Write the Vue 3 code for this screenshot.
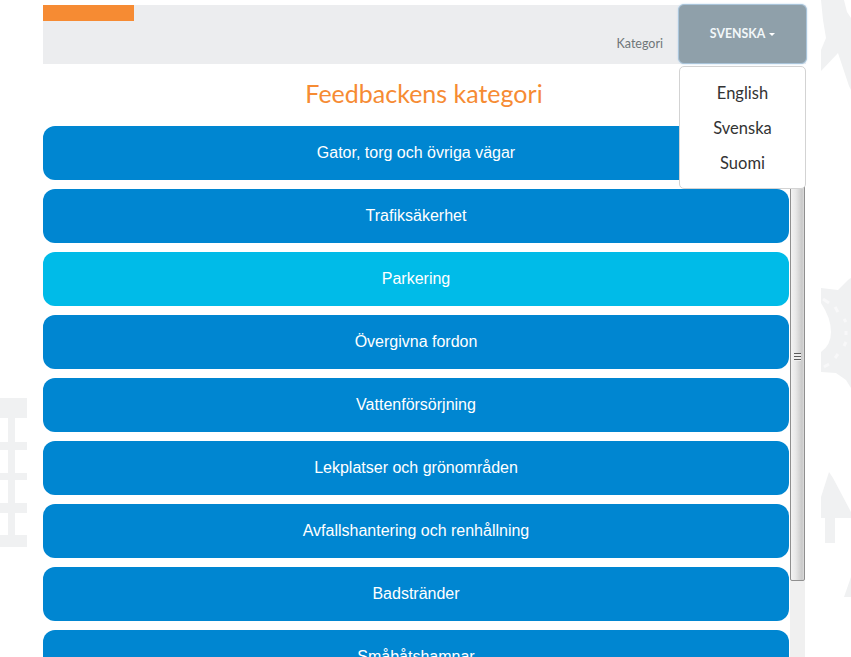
<script setup>
const categories = [
  { label: 'Gator, torg och övriga vägar' },
  { label: 'Trafiksäkerhet' },
  { label: 'Parkering', active: true },
  { label: 'Övergivna fordon' },
  { label: 'Vattenförsörjning' },
  { label: 'Lekplatser och grönområden' },
  { label: 'Avfallshantering och renhållning' },
  { label: 'Badstränder' },
  { label: 'Småbåtshamnar' }
]
const languages = ['English', 'Svenska', 'Suomi']
</script>

<template>
  <div class="page">
    <svg class="decor" width="851" height="657" viewBox="0 0 851 657" aria-hidden="true">
      <g fill="#f0f1f2">
        <path d="M0 398h27v20H15v24h12v8H15v23h12v7H15v23h12v10H15v22h12v12H0v-12h8v-22H0v-10h8v-23H0v-7h8v-23H0v-8h8v-24H0z" />
        <path d="M821 0H844L847 12L851 18V90L849 86L838 53L821 71V50L826 38L823 20Z" />
        <path d="M821 288L838 290L848 280L851 278V388L846 380L836 373L821 372V352Q831 345 831 332Q831 318 821 303Z" />
        <path d="M829 472L833 478L851 512V518H835V543H825V518H821V497Z" />
        <path d="M851 577L844 597H851Z" />
      </g>
      <g stroke="#f8f8f9" stroke-width="3" fill="none">
        <path d="M823 299L829 303M835 307L838 312M844 319L846 322M846 331V335M844 346L846 342M835 358L838 354M824 367L829 364" />
      </g>
    </svg>

    <main class="shell">
      <header class="topbar">
        <div class="logo"></div>
        <span class="crumb">Kategori</span>
        <div class="lang">
          <button class="lang-btn" type="button">SVENSKA<span class="caret"></span></button>
          <ul class="lang-menu">
            <li v-for="l in languages" :key="l">{{ l }}</li>
          </ul>
        </div>
      </header>

      <h1 class="title">Feedbackens kategori</h1>

      <div class="scroller">
        <div class="list">
          <button
            v-for="c in categories"
            :key="c.label"
            type="button"
            class="cat"
            :class="{ active: c.active }"
          >{{ c.label }}</button>
        </div>
        <div class="scrollbar">
          <div class="thumb"><span class="grip"></span></div>
        </div>
      </div>
    </main>
  </div>
</template>

<style>
html, body { margin: 0; background: #fff; overflow: hidden; }
</style>

<style scoped>
.page {
  position: relative;
  width: 851px;
  height: 657px;
  overflow: hidden;
  background: #fff;
  padding: 5px 0 0 43px;
  box-sizing: border-box;
}
.decor { position: absolute; left: 0; top: 0; }
.shell { position: relative; width: 763px; }

.topbar {
  position: relative;
  height: 59px;
  background: #ecedef;
  display: flex;
  justify-content: flex-end;
  align-items: flex-end;
}
.logo { position: absolute; left: 0; top: 0; width: 91px; height: 16px; background: #f68b33; }
.crumb {
  font: 12.5px/1 Lato, sans-serif;
  color: #6f7679;
  margin: 0 15px 14px 0;
}
.lang { position: relative; width: 128px; height: 59px; }
.lang-btn {
  position: absolute;
  left: 0;
  top: -1px;
  width: 129px;
  height: 60px;
  box-sizing: border-box;
  background: #8fa0aa;
  border: 1px solid #a9c4da;
  box-shadow: 0 0 2px #bcd8ee;
  border-radius: 6px;
  color: #f2f7f9;
  font: 700 12.3px/1 Lato, sans-serif;
  padding: 0;
  display: flex;
  align-items: center;
  justify-content: center;
}
.caret {
  display: inline-block;
  margin-left: 4px;
  border-top: 3px solid #fff;
  border-left: 3px solid transparent;
  border-right: 3px solid transparent;
}
.lang-menu {
  position: absolute;
  z-index: 2;
  left: 1px;
  top: 61px;
  width: 127px;
  height: 123px;
  box-sizing: border-box;
  margin: 0;
  padding: 9px 0 7px;
  list-style: none;
  background: #fff;
  border: 1px solid #d3d3d3;
  border-radius: 5px;
}
.lang-menu li {
  text-align: center;
  font: 16.5px/35px Lato, sans-serif;
  color: #333;
}

.title {
  margin: 0;
  height: 62px;
  box-sizing: border-box;
  padding-top: 13px;
  padding-right: 1px;
  text-align: center;
  font: 400 25px/32px Lato, sans-serif;
  color: #f68b33;
}

.scroller { display: flex; align-items: flex-start; height: 600px; }
.list { width: 746px; display: flex; flex-direction: column; gap: 9px; flex: none; }
.cat {
  height: 54px;
  flex: none;
  border: 0;
  border-radius: 12px;
  background: #0086d1;
  color: #fff;
  font: 16px/1 "Liberation Sans", sans-serif;
  padding: 0;
}
.cat.active { background: #00bbe8; }

.scrollbar {
  margin-left: 1px;
  width: 15px;
  height: 600px;
  box-sizing: border-box;
  padding-top: 7px;
  background: #f0f0f0;
  flex: none;
}
.thumb {
  height: 448px;
  box-sizing: border-box;
  border: 1px solid #8f8f8f;
  border-radius: 2px;
  background: linear-gradient(90deg, #f3f3f3, #e8e8e8 35%, #c9c9c9 85%, #dcdcdc);
  display: flex;
  align-items: center;
  justify-content: center;
}
.grip {
  width: 7px;
  height: 8px;
  background: repeating-linear-gradient(#5a5a5a 0 1px, #eee 1px 3px);
}
</style>
